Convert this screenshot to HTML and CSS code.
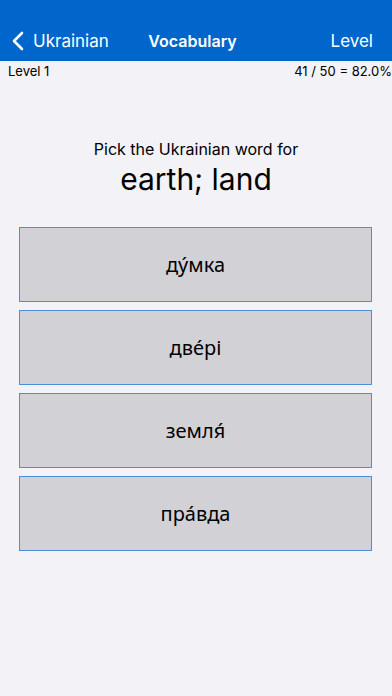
FILE: index.html
```html
<!DOCTYPE html>
<html lang="en">
  <head>
    <meta charset="UTF-8" />
    <meta name="viewport" content="width=device-width, initial-scale=1.0" />
    <link rel="stylesheet" href="styles.css">
    <title>Vocabulary</title>
  </head>
  <body>
    <div class="nav">
      <div class="nav-back">
        <svg width="12" height="20" viewBox="0 0 12 20">
          <path d="M10 2 L2 10 L10 18" fill="none" stroke="#fff" stroke-width="2.6" stroke-linecap="round" stroke-linejoin="round" />
        </svg>
        <span>Ukrainian</span>
      </div>
      <div class="nav-title">Vocabulary</div>
      <div class="nav-right">Level</div>
    </div>
    <div class="status">
      <span>Level 1</span>
      <span>41 / 50 = 82.0%</span>
    </div>
    <div class="question">
      <div class="prompt">Pick the Ukrainian word for</div>
      <div class="word">earth; land</div>
    </div>
    <ul class="answers">
      <li class="answer">ду́мка</li>
      <li class="answer">две́рі</li>
      <li class="answer">земля́</li>
      <li class="answer">пра́вда</li>
    </ul>
  </body>
</html>
```

FILE: styles.css
```css
* {
  margin: 0;
  padding: 0;
  box-sizing: border-box;
}
body {
  background: #f2f2f7;
  font-family: Inter, "Noto Sans", "Liberation Sans", sans-serif;
  color: #000;
}

.nav {
  display: flex;
  height: 61px;
  padding: 20px 19px 0 12px;
  align-items: center;
  justify-content: space-between;
  background: #0066cc;
  color: #fff;
  font-size: 17px;
}
.nav-back {
  display: flex;
  align-items: center;
  gap: 9px;
  width: 110px;
}
.nav-title {
  font-weight: 600;
  font-size: 16px;
}
.nav-right {
  width: 110px;
  text-align: right;
}

.status {
  display: flex;
  justify-content: space-between;
  padding: 2px 0 0 8px;
  font-size: 13px;
  height: 20px;
}

.question {
  padding-top: 58px;
  text-align: center;
}
.prompt {
  font-size: 16px;
  line-height: 20px;
}
.word {
  font-size: 30px;
  line-height: 40px;
}

.answers {
  list-style: none;
  display: flex;
  flex-direction: column;
  gap: 8px;
  padding: 28px 20px 0 19px;
}
.answer {
  height: 75px;
  display: flex;
  align-items: center;
  justify-content: center;
  background: #d2d1d6;
  border: 1px solid #4a8fdb;
  font-family: "Noto Sans", sans-serif;
  font-size: 20px;
}
```
